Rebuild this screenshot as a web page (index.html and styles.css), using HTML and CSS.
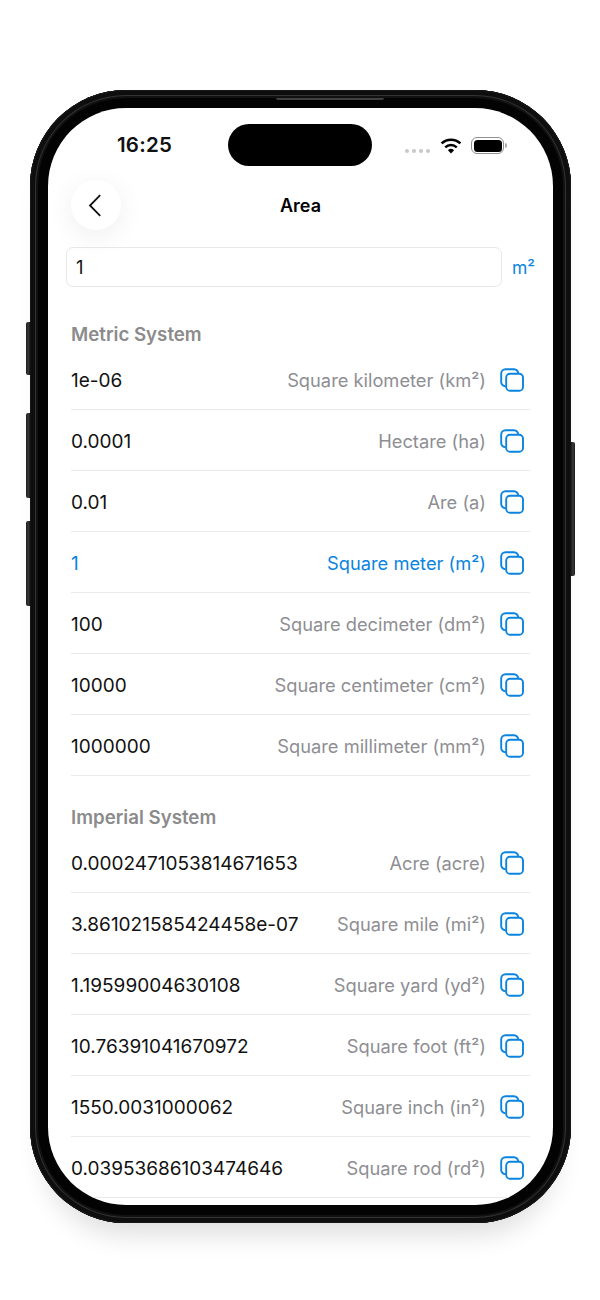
FILE: index.html
```html
<!DOCTYPE html>
<html lang="en">
<head>
<meta charset="utf-8">
<title>Area</title>
<link rel="stylesheet" href="styles.css">
</head>
<body>
<svg class="defs" width="0" height="0" aria-hidden="true">
  <symbol id="copy" viewBox="0 0 24 24">
    <path d="M5.6 18.2A4.2 4.2 0 0 1 1.2 14V5.5A4.3 4.3 0 0 1 5.5 1.2H14a4.2 4.2 0 0 1 4.2 4.3" fill="none" stroke="currentColor" stroke-width="1.9"/>
    <rect x="6.2" y="5.8" width="16.8" height="17" rx="3.8" fill="none" stroke="currentColor" stroke-width="1.9"/>
  </symbol>
</svg>
<div class="phone">
  <span class="side side-mute"></span>
  <span class="side side-up"></span>
  <span class="side side-down"></span>
  <span class="side side-power"></span>
  <span class="speaker"></span>
  <main class="screen">
    <span class="island"></span>
    <div class="status">
      <span class="time">16:25</span>
      <div class="status-icons">
        <span class="dots"><i></i><i></i><i></i><i></i></span>
        <svg class="wifi" viewBox="0 0 22 17" width="22" height="17">
          <path d="M11 16.6 7.9 13.2a4.6 4.6 0 0 1 6.2 0Z" fill="#000"/>
          <path d="M5.2 10.3a8.6 8.6 0 0 1 11.6 0" fill="none" stroke="#000" stroke-width="2.5"/>
          <path d="M1.6 6.4a13.8 13.8 0 0 1 18.8 0" fill="none" stroke="#000" stroke-width="2.6"/>
        </svg>
        <span class="battery"><span class="battery-fill"></span></span>
      </div>
    </div>
    <header class="nav">
      <button class="back" type="button" aria-label="Back">
        <svg viewBox="0 0 14 23" width="14" height="23"><path d="M12.2 1.2 2 11.5l10.2 10.3" fill="none" stroke="#111" stroke-width="1.8"/></svg>
      </button>
      <h1 class="title">Area</h1>
    </header>
    <div class="input-row">
      <div class="input">1</div>
      <span class="unit">m²</span>
    </div>
    <section class="group group-first">
      <h2 class="group-title">Metric System</h2>
      <div class="row"><span class="value">1e-06</span><span class="label">Square kilometer (km²)</span><svg class="copy"><use href="#copy"/></svg></div>
      <div class="row"><span class="value">0.0001</span><span class="label">Hectare (ha)</span><svg class="copy"><use href="#copy"/></svg></div>
      <div class="row"><span class="value">0.01</span><span class="label">Are (a)</span><svg class="copy"><use href="#copy"/></svg></div>
      <div class="row row-active"><span class="value">1</span><span class="label">Square meter (m²)</span><svg class="copy"><use href="#copy"/></svg></div>
      <div class="row"><span class="value">100</span><span class="label">Square decimeter (dm²)</span><svg class="copy"><use href="#copy"/></svg></div>
      <div class="row"><span class="value">10000</span><span class="label">Square centimeter (cm²)</span><svg class="copy"><use href="#copy"/></svg></div>
      <div class="row"><span class="value">1000000</span><span class="label">Square millimeter (mm²)</span><svg class="copy"><use href="#copy"/></svg></div>
    </section>
    <section class="group">
      <h2 class="group-title">Imperial System</h2>
      <div class="row"><span class="value">0.0002471053814671653</span><span class="label">Acre (acre)</span><svg class="copy"><use href="#copy"/></svg></div>
      <div class="row"><span class="value">3.861021585424458e-07</span><span class="label">Square mile (mi²)</span><svg class="copy"><use href="#copy"/></svg></div>
      <div class="row"><span class="value">1.19599004630108</span><span class="label">Square yard (yd²)</span><svg class="copy"><use href="#copy"/></svg></div>
      <div class="row"><span class="value">10.76391041670972</span><span class="label">Square foot (ft²)</span><svg class="copy"><use href="#copy"/></svg></div>
      <div class="row"><span class="value">1550.0031000062</span><span class="label">Square inch (in²)</span><svg class="copy"><use href="#copy"/></svg></div>
      <div class="row"><span class="value">0.03953686103474646</span><span class="label">Square rod (rd²)</span><svg class="copy"><use href="#copy"/></svg></div>
    </section>
  </main>
</div>
</body>
</html>
```
FILE: styles.css
```css
* { box-sizing: border-box; }
html, body { margin: 0; height: 1300px; overflow: hidden; background: #fff; }
body { font-family: Inter, "Liberation Sans", sans-serif; color: #111; padding: 90px 29px 0 30px; }
.defs { position: absolute; }

.phone {
  position: relative;
  width: 541px;
  height: 1133px;
  padding: 18px;
  border-radius: 96px;
  background: #030303;
  box-shadow:
    inset 0 0 0 1px #181818,
    inset 0 0 0 5px #0e0e0e,
    inset 0 0 0 6px #333,
    inset 0 0 0 8px #111,
    0 26px 26px -14px rgba(0,0,0,.13);
}
.side { position: absolute; width: 5px; background: linear-gradient(90deg, #181818, #3a3a3a 40%, #0a0a0a); border-radius: 2px 0 0 2px; }
.side-mute { left: -4px; top: 232px; height: 53px; }
.side-up { left: -4px; top: 323px; height: 85px; }
.side-down { left: -4px; top: 431px; height: 85px; }
.side-power { right: -4px; top: 352px; width: 5px; height: 134px; border-radius: 0 2px 2px 0; background: linear-gradient(270deg, #181818, #3a3a3a 40%, #0a0a0a); }
.speaker { position: absolute; left: 246px; top: 8px; width: 108px; height: 2px; background: #3f3f3f; border-radius: 0 0 3px 3px; }

.screen {
  position: relative;
  height: 1097px;
  overflow: hidden;
  background: #fff;
  border-radius: 78px;
  font-size: 19px;
}
.island { position: absolute; left: 180px; top: 16px; width: 144px; height: 42px; border-radius: 21px; background: #000; }
.status { height: 72px; padding: 24px 49px 0 69px; display: flex; justify-content: space-between; align-items: flex-start; }
.time { font-size: 20.5px; font-weight: 600; line-height: 25px; color: #111; letter-spacing: .2px; }
.status-icons { display: flex; align-items: flex-start; padding-top: 5px; }
.dots { display: flex; gap: 2.6px; margin-top: 12px; margin-right: 10px; }
.dots i { width: 4.4px; height: 4.4px; border-radius: 50%; background: #c8c8c8; }
.wifi { margin-right: 9px; }
.battery { position: relative; display: block; width: 33px; height: 17px; border: 1.5px solid #8f8f8f; border-radius: 6px; padding: 1.5px; }
.battery::after { content: ""; position: absolute; right: -4px; top: 4.5px; width: 2px; height: 5px; border-radius: 0 2px 2px 0; background: #aaa; }
.battery-fill { display: block; height: 100%; border-radius: 3.5px; background: #000; }

.nav { position: relative; height: 50px; display: flex; align-items: center; justify-content: center; }
.back {
  position: absolute; left: 23px; top: 0;
  width: 50px; height: 50px; padding: 0 2px 0 0;
  display: flex; align-items: center; justify-content: center;
  border: 0; border-radius: 50%; background: #fff;
  box-shadow: 0 6px 28px rgba(0,0,0,.07);
}
.title { margin: 0; font-size: 18px; font-weight: 600; color: #000; }

.input-row { display: flex; align-items: center; gap: 10px; margin: 17px 18px 0; }
.input { flex: 1; height: 40px; line-height: 38px; padding-left: 9px; font-size: 18.5px; border: 1px solid #e8e8e8; border-radius: 7px; background: #fff; }
.unit { width: 23px; font-size: 17.5px; color: #0a84e0; font-weight: 400; white-space: nowrap; }

.group { margin: 26px 23px 0; }
.group-first { margin-top: 32px; }
.group-title { margin: 0; height: 30px; line-height: 32px; font-size: 18.7px; font-weight: 600; color: #8b8b8b; }
.row { height: 61px; padding-top: 1px; display: flex; align-items: center; border-bottom: 1px solid #eaeaea; }
.value { flex: 1; padding-top: 2px; color: #111; white-space: nowrap; }
.label { font-size: 18.3px; color: #8e8e93; white-space: nowrap; }
.copy { width: 24px; height: 24px; margin: 0 6px 0 14px; color: #0a84e0; }
.row-active .value, .row-active .label { color: #0a84e0; }
```
